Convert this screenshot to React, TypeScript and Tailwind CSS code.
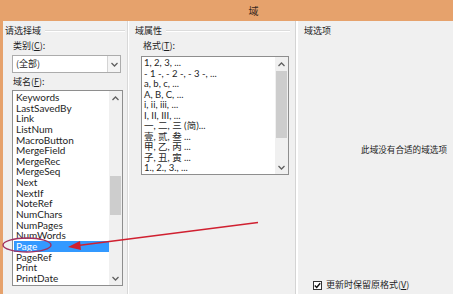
import React from 'react';

const fieldNames = [
    'Keywords', 'LastSavedBy', 'Link', 'ListNum', 'MacroButton', 'MergeField', 'MergeRec', 'MergeSeq',
    'Next', 'NextIf', 'NoteRef', 'NumChars', 'NumPages', 'NumWords', 'Page', 'PageRef', 'Print', 'PrintDate',
];

const formats = [
    '1, 2, 3, ...', '- 1 -, - 2 -, - 3 -, ...', 'a, b, c, ...', 'A, B, C, ...', 'i, ii, iii, ...', 'I, II, III, ...',
    '一, 二, 三 (简)...', '壹, 贰, 叁 ...', '甲, 乙, 丙 ...', '子, 丑, 寅 ...', '1., 2., 3., ...',
];

const Chevron: React.FC<{ up?: boolean }> = ({ up }) => (
    <svg width="7" height="5" viewBox="0 0 7 5" className="block">
        <path d={up ? 'M0.5 4 L3.5 1 L6.5 4' : 'M0.5 1 L3.5 4 L6.5 1'} fill="none" stroke="#606060" strokeWidth="1.3" />
    </svg>
);

const GroupTitle: React.FC<{ text: string }> = ({ text }) => (
    <div className="flex items-center gap-[4px] h-[14px]">
        <span className="text-[9px] leading-[14px] text-[#1e1e1e] whitespace-nowrap">{text}</span>
        <div className="flex-1 h-[2px] border-t border-[#dcdcdc] border-b-white border-b" />
    </div>
);

const App: React.FC = () => {
    return (
        <div className="w-[453px] h-[294px] overflow-hidden bg-[#e6a26c] flex flex-col relative font-['Noto_Sans_CJK_SC',sans-serif]">
            {/* title bar */}
            <div className="h-[21px] flex items-center justify-center text-[10px] text-[#3a2a1e] pl-[54px]">域</div>

            <div className="flex-1 ml-[3px] bg-[#f0f0f0] flex">
                {/* left: 请选择域 */}
                <div className="w-[124px] pl-[2px] pr-[2px] pt-[3px] flex flex-col">
                    <GroupTitle text="请选择域" />
                    <div className="pl-[8px] mt-[1px] text-[9px] leading-[14px] text-[#1e1e1e]">类别(<span className="underline">C</span>):</div>
                    <div className="ml-[7px] mt-[2px] h-[18px] w-[109px] border border-[#acacac] bg-white flex">
                        <div className="flex-1 pl-[3px] text-[9px] leading-[16px] text-[#1e1e1e]">(全部)</div>
                        <div className="w-[13px] border-l border-[#d4d4d4] bg-[#f4f4f4] flex items-center justify-center">
                            <Chevron />
                        </div>
                    </div>
                    <div className="pl-[8px] mt-[2px] text-[9px] leading-[14px] text-[#1e1e1e]">域名(<span className="underline">F</span>):</div>
                    <div className="ml-[7px] mt-[1px] h-[196px] w-[111px] border border-[#8e8e8e] bg-white flex">
                        <div className="flex-1 pt-[1px] pl-[1px] font-['Lato','Open_Sans',sans-serif]">
                            {fieldNames.map((name) => (
                                <div
                                    key={name}
                                    className={`h-[10.65px] pl-[2px] text-[10px] leading-[10.65px] whitespace-nowrap ${name === 'Page' ? 'bg-[#3399ff] text-white' : 'text-[#1e1e1e]'}`}
                                >
                                    {name}
                                </div>
                            ))}
                        </div>
                        <div className="w-[13px] flex flex-col items-center bg-[#f0f0f0]">
                            <div className="h-[14px] flex items-center"><Chevron up /></div>
                            <div className="h-[71px]" />
                            <div className="w-[11px] h-[39px] bg-[#cdcdcd]" />
                            <div className="flex-1" />
                            <div className="h-[14px] flex items-center"><Chevron /></div>
                        </div>
                    </div>
                </div>

                {/* divider */}
                <div className="w-[3px] flex">
                    <div className="w-[1px] bg-[#d8d8d8]" />
                    <div className="w-[1px] bg-white" />
                </div>

                {/* middle: 域属性 */}
                <div className="w-[165px] pl-[5px] pr-[5px] pt-[3px] flex flex-col">
                    <GroupTitle text="域属性" />
                    <div className="pl-[8px] mt-[1px] text-[9px] leading-[14px] text-[#1e1e1e]">格式(<span className="underline">T</span>):</div>
                    <div className="ml-[6px] mt-[3px] h-[119px] w-[148px] border border-[#8e8e8e] bg-white flex">
                        <div className="flex-1 pt-[1px] pl-[2px] font-['Lato','Noto_Sans_CJK_SC',sans-serif]">
                            {formats.map((f) => (
                                <div key={f} className="h-[10.5px] text-[9.5px] leading-[10.5px] text-[#1e1e1e] whitespace-nowrap">{f}</div>
                            ))}
                        </div>
                        <div className="w-[13px] flex flex-col items-center bg-[#f0f0f0]">
                            <div className="h-[14px] flex items-center"><Chevron up /></div>
                            <div className="w-[11px] h-[67px] bg-[#cdcdcd]" />
                            <div className="flex-1" />
                            <div className="h-[14px] flex items-center"><Chevron /></div>
                        </div>
                    </div>
                </div>

                {/* divider */}
                <div className="w-[4px] flex">
                    <div className="w-[1px] bg-[#d4d4d4]" />
                    <div className="w-[2px] bg-white" />
                </div>

                {/* right: 域选项 */}
                <div className="flex-1 pl-[5px] pr-[6px] pt-[3px] flex flex-col">
                    <div className="h-[14px] text-[9px] leading-[14px] text-[#1e1e1e]">域选项</div>
                    <div className="mt-[104px] text-right text-[8.6px] leading-[14px] text-[#1e1e1e]">此域没有合适的域选项</div>
                    <div className="flex-1" />
                    <div className="flex items-center gap-[4px] pl-[9px] mb-[2px]">
                        <div className="w-[9px] h-[9px] border border-[#333] bg-white flex items-center justify-center">
                            <svg width="7" height="7" viewBox="0 0 7 7">
                                <path d="M0.8 3.6 L2.7 5.5 L6.2 1.2" fill="none" stroke="#111" strokeWidth="1.4" />
                            </svg>
                        </div>
                        <span className="text-[9px] leading-[14px] text-[#1e1e1e]">更新时保留原格式(<span className="underline">V</span>)</span>
                    </div>
                </div>
            </div>

            {/* red annotation: ellipse + arrow */}
            <svg className="absolute left-0 top-0 pointer-events-none" width="453" height="294" viewBox="0 0 453 294">
                <ellipse cx="27" cy="245" rx="24" ry="7" fill="none" stroke="#a03060" strokeWidth="1.4" />
                <line x1="258" y1="222.5" x2="78" y2="245.5" stroke="#d02030" strokeWidth="1.6" />
                <path d="M68 247 L80 241 L81 250 Z" fill="#d02030" />
            </svg>
        </div>
    );
};

export default App;
